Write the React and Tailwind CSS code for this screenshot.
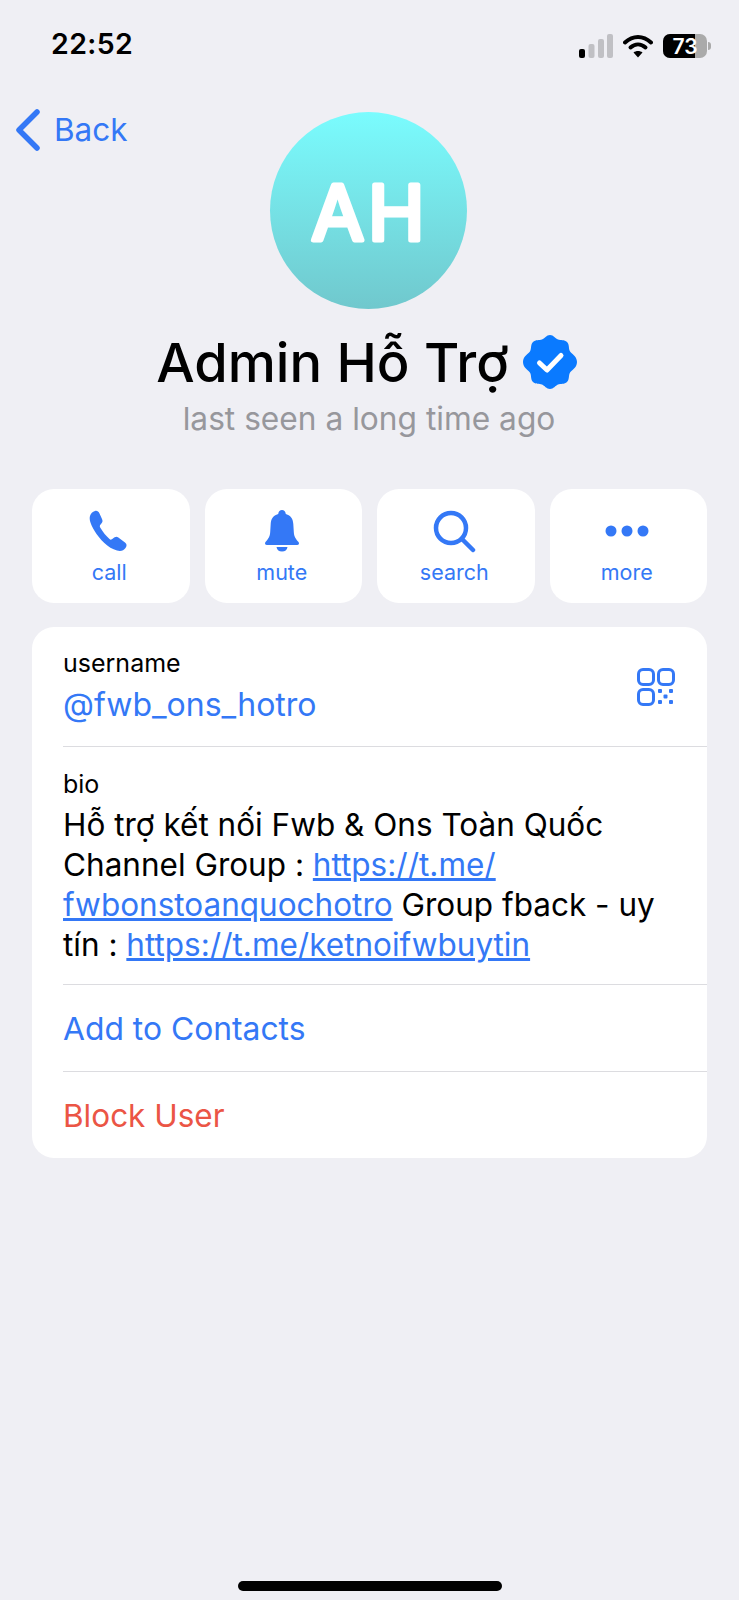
const font = { fontFamily: 'Inter, "Noto Sans", sans-serif' };

function StatusBar() {
  return (
    <div className="flex items-center justify-between h-[92px] pl-[51px] pr-[28px]">
      <span className="text-[28.5px] font-semibold text-black tracking-[0.4px] mt-[-4px]">22:52</span>
      <div className="flex items-center">
        <svg width="34" height="24" viewBox="0 0 34 24" className="mr-[10px]">
          <rect x="0" y="15" width="6" height="9" rx="2" fill="#000" />
          <rect x="9.5" y="10" width="6" height="14" rx="2" fill="#c0c0c4" />
          <rect x="19" y="5" width="6" height="19" rx="2" fill="#c0c0c4" />
          <rect x="28" y="0" width="6" height="24" rx="2" fill="#c0c0c4" />
        </svg>
        <svg width="30" height="24" viewBox="0 0 30 24" className="mr-[10px]">
          <path d="M2 8.5C10 1 20 1 28 8.5" fill="none" stroke="#000" strokeWidth="4" strokeLinecap="round" />
          <path d="M7.5 13.5C12 9.5 18 9.5 22.5 13.5" fill="none" stroke="#000" strokeWidth="4" strokeLinecap="round" />
          <path d="M15 23.5L10.5 18.5C13 16.5 17 16.5 19.5 18.5Z" fill="#000" />
        </svg>
        <div className="flex items-center">
          <div className="relative w-[44px] h-[24px] rounded-[7px] bg-[#aaaaaa] overflow-hidden flex items-center justify-center">
            <div className="absolute left-0 top-0 bottom-0 w-[32px] bg-black" />
            <span className="relative text-[21px] font-semibold text-white leading-none">73</span>
          </div>
          <div className="w-[3px] h-[8px] rounded-r-full bg-[#aaaaaa] ml-[1px]" />
        </div>
      </div>
    </div>
  );
}

function ActionButton({ icon, label }) {
  return (
    <div className="h-[114px] rounded-[22px] bg-white flex flex-col items-center pr-[3px] text-[#3478f6]">
      <div className="h-[44px] mt-[20px] flex items-center justify-center">{icon}</div>
      <span className="mt-[6px] text-[21.5px] leading-[26px]">{label}</span>
    </div>
  );
}

export default function App() {
  return (
    <div className="relative w-[739px] h-[1600px] bg-[#efeff4] overflow-hidden" style={font}>
      <StatusBar />

      {/* Nav and avatar */}
      <div className="grid grid-cols-[1fr_197px_1fr] mt-[20px] pr-[2px]">
        <div className="flex items-center h-[36px] pl-[15px] text-[#3478f6]">
          <svg width="26" height="42" viewBox="0 0 26 42" fill="none" className="shrink-0">
            <path d="M22 3L4 21L22 39" stroke="#3478f6" strokeWidth="5.5" strokeLinecap="round" strokeLinejoin="round" />
          </svg>
          <span className="ml-[13px] text-[31.5px] leading-none">Back</span>
        </div>
        <div className="w-[197px] h-[197px] rounded-full bg-gradient-to-b from-[#7afcfe] to-[#70c8cd]">
          <svg width="197" height="197" viewBox="0 0 197 197">
            <text
              x="100"
              y="128"
              textAnchor="middle"
              fontSize="76"
              fontWeight="400"
              letterSpacing="4"
              fill="#fff"
              stroke="#fff"
              strokeWidth="5"
              strokeLinejoin="round"
            >
              AH
            </text>
          </svg>
        </div>
      </div>

      {/* Name */}
      <div className="flex items-center justify-center mt-[17px] h-[72px] pr-[5px]">
        <span className="text-[54.2px] font-medium text-black leading-none">Admin Hỗ Trợ</span>
        <svg width="56" height="56" viewBox="0 0 56 56" className="ml-[13px] mt-[-1px]">
          <path
            fill="#0a7aff"
            d="M28 1C31.500 1 33.500 4.500 36 5.500C38.500 6.500 42.500 5.500 45 8C47.500 10.500 46.500 14.500 47.800 17C49 19.500 55 22 55 28C55 34 49 36.500 47.800 39C46.500 41.500 47.500 45.500 45 48C42.500 50.500 38.500 49.500 36 50.500C33.500 51.500 31.500 55 28 55C24.500 55 22.500 51.500 20 50.500C17.500 49.500 13.500 50.500 11 48C8.500 45.500 9.500 41.500 8.200 39C7 36.500 1 34 1 28C1 22 7 19.500 8.200 17C9.500 14.500 8.500 10.500 11 8C13.500 5.500 17.500 6.500 20 5.500C22.500 4.500 24.500 1 28 1Z"
          />
          <path d="M17.500 29L25 36L39 21.500" fill="none" stroke="#fff" strokeWidth="5" strokeLinecap="round" strokeLinejoin="round" />
        </svg>
      </div>
      <p className="text-center text-[31.7px] leading-[40px] text-[#97979c] mt-[1px] pr-[1px]">last seen a long time ago</p>

      <div className="px-[32px] mt-[50px]">
        {/* Actions */}
        <div className="grid grid-cols-4 gap-[15px]">
          <ActionButton
            icon={
              <svg width="42" height="42" viewBox="0 0 42 42" fill="#3478f6">
                <path d="M7 1C9 0.500 10.500 1.500 11.500 3.500L14 9C15 11 14.500 12.500 13 14C11.500 15.500 11.500 16.500 12.500 18C15 22 18 26 21.500 29C22.500 30 23.500 29.800 25 28.500C26.800 26.800 28.300 26 30 27.200L37 32.500C39 34 39 36 37.500 38C35.500 40.500 33 41.500 29 40.500C20 38 12 30 6 20C2.500 14 1 9.500 2 6C2.800 3.500 4.500 1.600 7 1Z" />
              </svg>
            }
            label="call"
          />
          <ActionButton
            icon={
              <svg width="44" height="42" viewBox="0 0 44 42" fill="#3478f6">
                <path d="M22 0C24 0 25.500 1.500 25.800 4C31 5.500 33 9 33.300 14L33.800 22C34 27 36 29 38.500 32C39.500 33.500 39 35 37 35L7 35C5 35 4.500 33.500 5.500 32C8 29 10 27 10.200 22L10.700 14C11 9 13 5.500 18.200 4C18.500 1.500 20 0 22 0Z" />
                <path d="M16.500 37H27.500C27 40 25 41.500 22 41.500C19 41.500 17 40 16.500 37Z" />
              </svg>
            }
            label="mute"
          />
          <ActionButton
            icon={
              <svg width="44" height="44" viewBox="0 0 44 44" fill="none" stroke="#3478f6" strokeWidth="4.500" strokeLinecap="round">
                <circle cx="19" cy="19" r="15" />
                <path d="M30 30L41 41" />
              </svg>
            }
            label="search"
          />
          <ActionButton
            icon={
              <svg width="44" height="12" viewBox="0 0 44 12" fill="#3478f6">
                <circle cx="6" cy="6" r="5.500" />
                <circle cx="22" cy="6" r="5.500" />
                <circle cx="38" cy="6" r="5.500" />
              </svg>
            }
            label="more"
          />
        </div>

        {/* Info card */}
        <div className="mt-[24px] rounded-[22px] bg-white">
          <div className="flex items-center justify-between h-[120px] ml-[31px] border-b border-[#dcdce0] pr-[32px]">
            <div>
              <div className="text-[25px] leading-[36px] mt-[-1px] text-black">username</div>
              <div className="text-[32px] leading-[44px] mt-[2px] text-[#3478f6]">@fwb_ons_hotro</div>
            </div>
            <svg width="38" height="38" viewBox="0 0 38 38" fill="none" stroke="#3478f6" strokeWidth="3">
              <rect x="1.500" y="1.500" width="15" height="15" rx="4.500" />
              <rect x="21.500" y="1.500" width="15" height="15" rx="4.500" />
              <rect x="1.500" y="21.500" width="15" height="15" rx="4.500" />
              <g fill="#3478f6" stroke="none">
                <rect x="21" y="21" width="4" height="4" rx="1" />
                <rect x="32" y="21" width="4" height="4" rx="1" />
                <rect x="26.500" y="26.500" width="4" height="4" rx="1" />
                <rect x="21" y="32" width="4" height="4" rx="1" />
                <rect x="32" y="32" width="4" height="4" rx="1" />
              </g>
            </svg>
          </div>

          <div className="ml-[31px] h-[238px] border-b border-[#dcdce0] pt-[19px] pr-[32px]">
            <div className="text-[25px] leading-[36px] text-black">bio</div>
            <div className="text-[31.5px] leading-[40px] mt-[3px] text-black">
              Hỗ trợ kết nối Fwb &amp; Ons Toàn Quốc
              <br />
              Channel Group : <span className="text-[#3478f6] underline">https://t.me/</span>
              <br />
              <span className="text-[#3478f6] underline">fwbonstoanquochotro</span> Group fback - uy
              <br />
              tín : <span className="text-[#3478f6] underline">https://t.me/ketnoifwbuytin</span>
            </div>
          </div>

          <div className="ml-[31px] h-[87px] pt-[2px] flex items-center border-b border-[#dcdce0] text-[31.8px] text-[#3478f6]">
            Add to Contacts
          </div>
          <div className="ml-[31px] h-[86px] pt-[2px] flex items-center text-[31.5px] text-[#eb5545]">
            Block User
          </div>
        </div>
      </div>

      {/* Home indicator */}
      <div className="absolute left-[238px] bottom-[9px] w-[264px] h-[10px] rounded-full bg-black" />
    </div>
  );
}
